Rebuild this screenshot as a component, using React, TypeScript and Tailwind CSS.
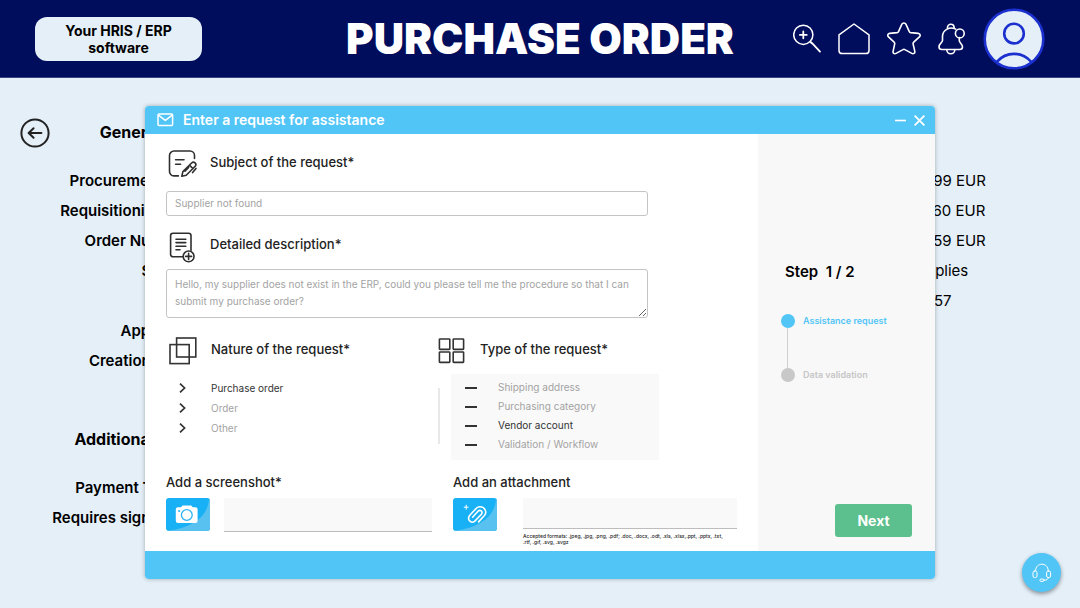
import React, { useState } from 'react';

const generalFields = [
  'Procurement BU',
  'Requisitioning BU',
  'Order Number',
  'Status',
  'Buyer',
  'Approver',
  'Creation Date',
];

const additionalFields = ['Payment Terms', 'Requires signature', 'Buyer'];

const orderValues = ['1 021 200.99 EUR', '1 021 250.60 EUR', '1 021 450.59 EUR', 'Office supplies', 'PO 2000257'];

const natures = ['Purchase order', 'Order', 'Other'];

const requestTypes = ['Shipping address', 'Purchasing category', 'Vendor account', 'Validation / Workflow'];

const SearchIcon = () => (
  <svg width="28" height="29" viewBox="0 0 28 29" fill="none" stroke="white" strokeWidth="1.5" strokeLinecap="round">
    <circle cx="10.3" cy="10.8" r="9.6" />
    <path d="M10.3 7.5v6.8M6.9 10.9h6.8" strokeWidth="1.8" />
    <path d="M17.2 17.8l1.6 1.4M18.6 18.6l8.4 9" strokeWidth="1.8" />
  </svg>
);

const HomeIcon = () => (
  <svg width="32" height="32" viewBox="0 0 32 32" fill="none" stroke="white" strokeWidth="1.5" strokeLinejoin="round">
    <path d="M16 1L1 11.8V27.4a3.2 3.2 0 0 0 3.2 3.2H27.8a3.2 3.2 0 0 0 3.2-3.2V11.8z" />
  </svg>
);

const StarIcon = () => (
  <svg width="34" height="33" viewBox="0 0 34 33" fill="none" stroke="white" strokeWidth="1.6" strokeLinejoin="round">
    <path d="M14.9 2.2C15.7 .6 18.1 .6 18.9 2.2L22.3 9.6C22.6 10.2 23 10.5 23.7 10.6L31.2 11.4C33.2 11.7 33.8 13.6 32.4 14.9L26.7 20.1C26.2 20.6 26 21.1 26.1 21.8L27.8 29.4C28.1 31.3 26.4 32.3 24.8 31.4L17.9 27.6C17.3 27.2 16.6 27.2 16 27.6L9.1 31.4C7.4 32.3 5.7 31.2 6.1 29.4L7.7 21.8C7.8 21.1 7.6 20.6 7.1 20.1L1.5 14.9C.1 13.6 .7 11.7 2.6 11.4L10.1 10.6C10.8 10.5 11.2 10.2 11.5 9.6z" />
  </svg>
);

const BellIcon = () => (
  <svg width="28" height="32" viewBox="0 0 28 32" fill="none" stroke="white" strokeWidth="1.6" strokeLinecap="round" strokeLinejoin="round">
    <path d="M17.7 6.1C12 3.2 4.8 6.6 4.5 13.2V17.6C4.5 19.7 1 20.4 1 24C1 25.8 2.2 26.5 4 26.5H21.5C23.4 26.5 24.5 25.6 24.5 24C24.5 20.6 21.3 20 21.3 17.6V14.6" />
    <path d="M9.5 5.2V4.6a3.3 3.3 0 0 1 6.6 0V5.2M8.8 26.8a4 4 0 0 0 8 0" />
    <circle cx="21.8" cy="10.4" r="4.4" />
  </svg>
);

const AvatarIcon = () => (
  <svg width="62" height="62" viewBox="0 0 62 62" fill="none" stroke="#1b30cf" strokeWidth="2.6">
    <circle cx="31" cy="31" r="29.3" fill="#e4eff8" />
    <circle cx="31" cy="25.6" r="9.8" />
    <path d="M13.8 53.8C23.2 43.2 38.8 43.2 48.2 53.8" />
  </svg>
);

const BackIcon = () => (
  <svg width="30" height="30" viewBox="0 0 30 30" fill="none" stroke="#222" strokeWidth="2" strokeLinecap="round" strokeLinejoin="round">
    <circle cx="15" cy="15" r="13.6" />
    <path d="M21.4 15H8.8M13.6 10.2L8.6 15l5 4.8" />
  </svg>
);

const MailIcon = () => (
  <svg width="17" height="14" viewBox="0 0 17 14" fill="none" stroke="white" strokeWidth="1.5" strokeLinejoin="round">
    <rect x="1" y="1" width="14.6" height="11.6" rx="1" />
    <path d="M1.4 2.2L8.3 7.4l6.9-5.2" />
  </svg>
);

const SubjectIcon = () => (
  <svg className="shrink-0" width="30" height="30" viewBox="0 0 30 30" fill="none" stroke="#2f2f2f" strokeWidth="1.6" strokeLinecap="round" strokeLinejoin="round">
    <path d="M26.5 9.5V6.5A4.5 4.5 0 0 0 22 2H6A4.5 4.5 0 0 0 1.5 6.5V22A4.5 4.5 0 0 0 6 26.9H10.4" />
    <path d="M7.6 10.8H16M7.6 15.2H12.6" />
    <path d="M13.8 27.2L14.9 22.6L23.6 14C26 11.8 29.2 14.6 27.2 17.2L18.2 26.2zM21.4 16.2L25 19.6M17 22.2l3.6-3.8M28 19.4l-3.4 4.2" />
  </svg>
);

const DescriptionIcon = () => (
  <svg className="shrink-0" width="30" height="32" viewBox="0 0 30 32" fill="none" stroke="#2f2f2f" strokeWidth="1.6" strokeLinecap="round">
    <path d="M23 19.6V4.6A2.4 2.4 0 0 0 20.6 2.2H5A2.4 2.4 0 0 0 2.6 4.6V23.4A2.4 2.4 0 0 0 5 25.8H14.6" />
    <path d="M8 8.2H17.8M8 11.6H17.8M8 15.2H17.8M8 18.8H12" />
    <circle cx="20.6" cy="25.4" r="5.4" fill="white" />
    <path d="M20.6 22.4v6M17.6 25.4h6" />
  </svg>
);

const NatureIcon = () => (
  <svg className="shrink-0" width="30" height="28" viewBox="0 0 30 28" fill="none" stroke="#333" strokeWidth="1.6">
    <rect x="7.6" y="1" width="19.2" height="19" />
    <rect x="1" y="7.6" width="19.2" height="19" />
  </svg>
);

const TypeIcon = () => (
  <svg className="shrink-0" width="28" height="28" viewBox="0 0 28 28" fill="none" stroke="#333" strokeWidth="1.6">
    <rect x="1.4" y="2" width="10.4" height="10.4" rx=".6" />
    <rect x="15.2" y="2" width="10.4" height="10.4" rx=".6" />
    <rect x="1.4" y="15" width="10.4" height="10.4" rx=".6" />
    <rect x="15.2" y="15" width="10.4" height="10.4" rx=".6" />
  </svg>
);

const CameraTile = () => (
  <svg width="44" height="33" viewBox="0 0 44 33">
    <rect width="44" height="33" rx="3" fill="#19b1f5" />
    <path d="M43 0.6C42.4 17.5 28 29.5 2 32.8L3 33H41a3 3 0 0 0 3-3V3a3 3 0 0 0-1-2.4z" fill="#58c1f0" />
    <path d="M12 9.2H15L16.6 7.4H25.2L26.8 9.2H29.4A2.2 2.2 0 0 1 31.6 11.4V22.8A2.2 2.2 0 0 1 29.4 25H12A2.2 2.2 0 0 1 9.8 22.8V11.4A2.2 2.2 0 0 1 12 9.2z" fill="white" />
    <circle cx="20.8" cy="17" r="5.4" fill="none" stroke="#2bb4f4" strokeWidth="1.3" />
    <circle cx="13.2" cy="13" r="1.1" fill="#2bb4f4" />
  </svg>
);

const ClipTile = () => (
  <svg width="44" height="33" viewBox="0 0 44 33" fill="none" stroke="white" strokeLinecap="round">
    <rect width="44" height="33" rx="3" fill="#19b1f5" stroke="none" />
    <path d="M43 0.6C42.4 17.5 28 29.5 2 32.8L3 33H41a3 3 0 0 0 3-3V3a3 3 0 0 0-1-2.4z" fill="#58c1f0" stroke="none" />
    <path d="M13.2 7.2v4M11.2 9.2h4" strokeWidth="1" />
    <path d="M25.6 23.9L31.4 17.6C34.6 13.6 31.4 8.4 26.4 8.8C24.8 9 23.6 9.9 22.6 11L16.8 17.2C13.6 21.2 17.6 26 21.6 23.4L28.4 16.2C30.2 13.8 27.6 11.2 25.2 13L19.6 19.2" strokeWidth="1.6" />
  </svg>
);

const HeadsetIcon = () => (
  <svg width="20" height="20" viewBox="0 0 20 20" fill="none" stroke="white" strokeWidth="1" strokeLinecap="round">
    <path d="M3.6 7.4C3.6-1 16.2-1 16.2 7.4" />
    <rect x="1" y="8" width="4" height="6.6" rx="1.6" />
    <rect x="14.6" y="8" width="4" height="6.6" rx="1.6" />
    <path d="M16.2 14.6C16.2 16.4 14.8 17.2 12 17.2" />
    <ellipse cx="10" cy="17.2" rx="2.2" ry="1.3" />
  </svg>
);

const FieldList = ({ title, fields }: { title: string; fields: string[] }) => (
  <section className="w-[188px] text-right whitespace-nowrap">
    <h2 className="text-base leading-6 font-bold">{title}</h2>
    <ul className="mt-[22px] text-[15px] font-semibold">
      {fields.map((field) => (
        <li key={field} className="h-[30px] leading-[30px]">{field}</li>
      ))}
    </ul>
  </section>
);

export const App: React.FC = () => {
  const [subject, setSubject] = useState('');
  const [description, setDescription] = useState('');
  const [nature, setNature] = useState('Purchase order');
  const [requestType, setRequestType] = useState('Vendor account');

  return (
    <div className="flex min-h-screen flex-col bg-[#e4eff8] font-['Inter',sans-serif] text-black">
      <header className="grid h-[78px] grid-cols-[1fr_auto_1fr] items-center border-b border-[#3a4580] bg-[#000d5c] px-[35px]">
        <div className="w-[167px] rounded-xl bg-[#e4eff8] py-[5px] text-center text-sm leading-[17px] font-bold">
          Your HRIS / ERP
          <br />
          software
        </div>
        <h1 className="text-[42px] leading-none font-black whitespace-nowrap text-white">PURCHASE ORDER</h1>
        <nav className="flex items-center justify-end gap-[17px]">
          <button type="button" aria-label="Search"><SearchIcon /></button>
          <button type="button" aria-label="Home"><HomeIcon /></button>
          <button type="button" aria-label="Favorites"><StarIcon /></button>
          <button type="button" aria-label="Notifications"><BellIcon /></button>
          <button type="button" aria-label="Profile"><AvatarIcon /></button>
        </nav>
      </header>

      <main className="relative flex-1 pt-10">
        <div className="flex justify-between">
          <div className="flex">
            <button type="button" aria-label="Back" className="ml-5 h-[30px] w-0"><BackIcon /></button>
            <div className="-ml-5 space-y-[51px] pt-[2px]">
              <FieldList title="General list" fields={generalFields} />
              <FieldList title="Additional info" fields={additionalFields} />
            </div>
          </div>
          <ul className="w-[218px] pt-12 text-[15px]">
            {orderValues.map((value) => (
              <li key={value} className="h-[30px] leading-[30px]">{value}</li>
            ))}
          </ul>
        </div>

        {/* Assistance request dialog */}
        <div
          role="dialog"
          aria-labelledby="dialog-title"
          className="absolute inset-x-[145px] top-7 rounded-[4px] bg-white shadow-[0_0_4px_rgba(0,0,0,0.3)]"
        >
          <div className="flex h-7 items-center rounded-t-[4px] bg-[#52c5f7] pr-[10px] pl-3 text-white">
            <MailIcon />
            <h2 id="dialog-title" className="ml-[9px] flex-1 text-sm font-semibold">Enter a request for assistance</h2>
            <button type="button" aria-label="Minimize" className="mr-2">
              <svg width="11" height="11" viewBox="0 0 11 11" stroke="white" strokeWidth="1.6"><path d="M0 5.5h11" /></svg>
            </button>
            <button type="button" aria-label="Close">
              <svg width="11" height="11" viewBox="0 0 11 11" stroke="white" strokeWidth="1.8"><path d="M.6.6l9.8 9.8M10.4.6L.6 10.4" /></svg>
            </button>
          </div>

          <form className="flex" onSubmit={(e) => e.preventDefault()}>
            <div className="min-w-0 flex-1 px-[21px] pt-[15px] pb-[6px] text-[#222]">
              <div className="mr-[89px]">
                <div className="flex h-[30px] items-start gap-3 pl-[2px]">
                  <SubjectIcon />
                  <label htmlFor="subject" className="text-[13px] leading-[26px] font-medium">Subject of the request*</label>
                </div>
                <input
                  id="subject"
                  type="text"
                  value={subject}
                  onChange={(e) => setSubject(e.target.value)}
                  placeholder="Supplier not found"
                  className="mt-3 block h-[25px] w-full rounded-[3px] border border-[#c4c4c4] px-2 pb-[2px] text-[10px] placeholder:text-[#a3a3a3]"
                />
                <div className="mt-[15px] flex h-8 items-start gap-3 pl-[2px]">
                  <DescriptionIcon />
                  <label htmlFor="description" className="text-[13px] leading-[26px] font-medium">Detailed description*</label>
                </div>
                <textarea
                  id="description"
                  value={description}
                  onChange={(e) => setDescription(e.target.value)}
                  placeholder="Hello, my supplier does not exist in the ERP, could you please tell me the procedure so that I can submit my purchase order?"
                  className="mt-[6px] block h-[49px] w-full rounded-[3px] border border-[#c4c4c4] px-2 py-[6px] text-[10px] leading-[17px] placeholder:text-[#a3a3a3]"
                />
              </div>

              <div className="mt-[19px] grid grid-cols-[272px_1fr]">
                <fieldset>
                  <legend className="flex h-7 items-start gap-3 pl-[3px] text-[13px] leading-6 font-medium">
                    <NatureIcon />
                    Nature of the request*
                  </legend>
                  <div className="pt-[13px] pl-[13px]">
                    {natures.map((option) => (
                      <label
                        key={option}
                        className="flex h-5 items-center gap-[25px] text-[10px] text-[#a3a3a3] has-checked:text-[#333]"
                      >
                        <input
                          type="radio"
                          name="nature"
                          className="sr-only"
                          checked={nature === option}
                          onChange={() => setNature(option)}
                        />
                        <svg width="7" height="10" viewBox="0 0 7 10" fill="none" stroke="#333" strokeWidth="1.7">
                          <path d="M1 .6L5.6 5 1 9.4" />
                        </svg>
                        {option}
                      </label>
                    ))}
                  </div>
                </fieldset>

                <fieldset>
                  <legend className="flex h-7 items-start gap-[14px] text-[13px] leading-6 font-medium">
                    <TypeIcon />
                    Type of the request*
                  </legend>
                  <div className="flex gap-[11px] pt-[9px]">
                    <div className="mt-[14px] h-14 w-[2px] bg-[#e8e8e8]" />
                    <div className="w-[208px] bg-[#f9f9f9] pt-1 pb-[6px] pl-[14px]">
                      {requestTypes.map((option) => (
                        <label
                          key={option}
                          className="flex h-[19px] items-center gap-[21px] text-[10px] text-[#a3a3a3] has-checked:text-[#333]"
                        >
                          <input
                            type="radio"
                            name="requestType"
                            className="sr-only"
                            checked={requestType === option}
                            onChange={() => setRequestType(option)}
                          />
                          <span className="h-[2px] w-3 bg-[#333]" />
                          {option}
                        </label>
                      ))}
                    </div>
                  </div>
                </fieldset>
              </div>

              <div className="mt-[10px] grid grid-cols-[266fr_284fr] gap-[21px]">
                <div className="min-w-0">
                  <label htmlFor="screenshot" className="block text-[13px] leading-6 font-medium">Add a screenshot*</label>
                  <div className="mt-1 flex gap-[14px]">
                    <button type="button" aria-label="Upload a screenshot" className="h-[33px]"><CameraTile /></button>
                    <input id="screenshot" type="text" className="h-[34px] min-w-0 flex-1 border-b border-[#bdbdbd] bg-[#f9f9f9]" />
                  </div>
                </div>
                <div className="min-w-0">
                  <label htmlFor="attachment" className="block text-[13px] leading-6 font-medium">Add an attachment</label>
                  <div className="mt-1 flex gap-[26px]">
                    <button type="button" aria-label="Upload an attachment" className="h-[33px]"><ClipTile /></button>
                    <div className="min-w-0 flex-1">
                      <input id="attachment" type="text" className="block h-[31px] w-full border-b border-[#bdbdbd] bg-[#f9f9f9]" />
                      <p className="mt-1 text-[5px] leading-[6px] font-medium">
                        Accepted formats: .jpeg, .jpg, .png, .pdf; .doc, .docx, .odt, .xls, .xlsx,.ppt, .pptx, .txt,
                        <br />
                        .rtf, .gif, .svg, .svgz
                      </p>
                    </div>
                  </div>
                </div>
              </div>
            </div>

            <aside className="flex w-[177px] flex-col bg-[#f8f8f8] px-[23px] pt-[126px] pb-[14px]">
              <p className="pl-1 text-[15px] leading-6 font-semibold">Step&nbsp; 1 / 2</p>
              <ol className="mt-[30px] text-[9px] leading-[14px] font-semibold">
                <li className="flex items-center gap-2 text-[#52c5f7]">
                  <span className="size-[14px] rounded-full bg-[#52c5f7]" />
                  Assistance request
                </li>
                <li aria-hidden="true" className="ml-[6px] h-10 w-px bg-[#cfcfcf]" />
                <li className="flex items-center gap-2 text-[#c6c6c6]">
                  <span className="size-[14px] rounded-full bg-[#c8c8c8]" />
                  Data validation
                </li>
              </ol>
              <button
                type="submit"
                className="mt-auto h-[33px] w-[77px] self-end rounded-[3px] bg-[#5bc08d] text-sm font-bold text-white"
              >
                Next
              </button>
            </aside>
          </form>

          <div className="h-7 rounded-b-[4px] bg-[#52c5f7]" />
        </div>
      </main>

      <button
        type="button"
        aria-label="Help"
        className="fixed right-[19px] bottom-4 flex size-[39px] items-center justify-center rounded-full bg-[#52c5f7] shadow-[0_2px_4px_rgba(0,0,0,0.4)]"
      >
        <HeadsetIcon />
      </button>
    </div>
  );
};

export default App;
